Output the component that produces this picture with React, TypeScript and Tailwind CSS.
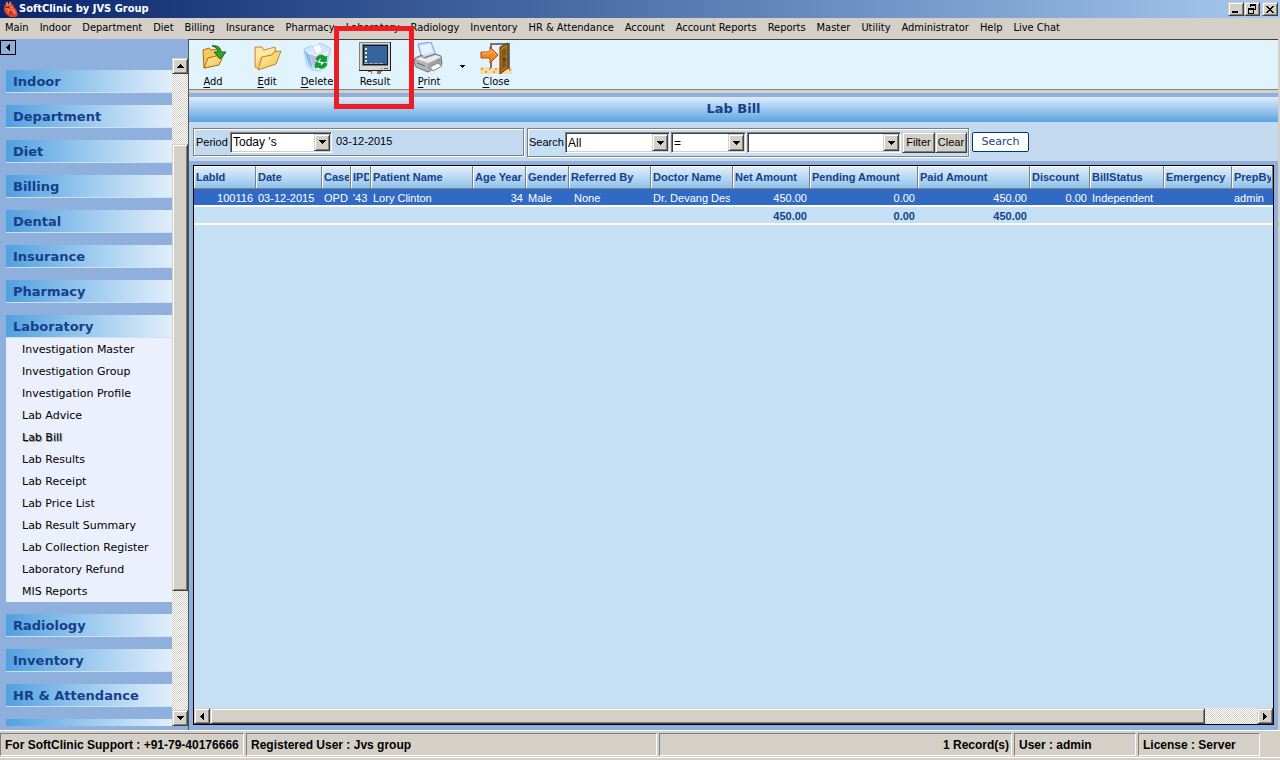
import React from 'react';

const menus = [
  'Main', 'Indoor', 'Department', 'Diet', 'Billing', 'Insurance', 'Pharmacy', 'Laboratory', 'Radiology', 'Inventory',
  'HR & Attendance', 'Account', 'Account Reports', 'Reports', 'Master', 'Utility', 'Administrator', 'Help', 'Live Chat',
];

const labItems = [
  'Investigation Master', 'Investigation Group', 'Investigation Profile', 'Lab Advice', 'Lab Bill', 'Lab Results',
  'Lab Receipt', 'Lab Price List', 'Lab Result Summary', 'Lab Collection Register', 'Laboratory Refund', 'MIS Reports',
];

const sections = [
  'Indoor', 'Department', 'Diet', 'Billing', 'Dental', 'Insurance', 'Pharmacy', 'Laboratory', 'Radiology', 'Inventory',
  'HR & Attendance', 'Account',
];

const columns = [
  { title: 'LabId', col: 'w-[62px]', value: '100116', total: '', right: true },
  { title: 'Date', col: 'w-[66px]', value: '03-12-2015', total: '' },
  { title: 'Case', col: 'w-[29px]', value: 'OPD', total: '' },
  { title: 'IPD', col: 'w-[20px]', value: "'43", total: '' },
  { title: 'Patient Name', col: 'w-[102px]', value: 'Lory Clinton', total: '' },
  { title: 'Age Year', col: 'w-[53px]', value: '34', total: '', right: true },
  { title: 'Gender', col: 'w-[43px]', value: 'Male', total: '' },
  { title: 'Referred By', col: 'w-[82px]', value: ' None', total: '' },
  { title: 'Doctor Name', col: 'w-[82px]', value: 'Dr. Devang Desai', total: '' },
  { title: 'Net Amount', col: 'w-[77px]', value: '450.00', total: '450.00', right: true },
  { title: 'Pending Amount', col: 'w-[108px]', value: '0.00', total: '0.00', right: true },
  { title: 'Paid Amount', col: 'w-[112px]', value: '450.00', total: '450.00', right: true },
  { title: 'Discount', col: 'w-[60px]', value: '0.00', total: '', right: true },
  { title: 'BillStatus', col: 'w-[74px]', value: 'Independent', total: '' },
  { title: 'Emergency', col: 'w-[68px]', value: '', total: '' },
  { title: 'PrepBy', col: '', value: 'admin', total: '' },
];

const raised =
  'border border-t-[#d4d0c8] border-l-[#d4d0c8] border-r-[#404040] border-b-[#404040] bg-[#d4d0c8] shadow-[inset_1px_1px_#fff,inset_-1px_-1px_#808080]';
const sunken =
  'border border-t-[#808080] border-l-[#808080] border-r-white border-b-white shadow-[inset_1px_1px_#404040,inset_-1px_-1px_#d4d0c8]';
const track = 'bg-[repeating-conic-gradient(#fff_0_25%,#d4d0c8_0_50%)] bg-[length:2px_2px]';

function Arrow({ dir }: { dir: 'up' | 'down' | 'left' | 'right' }) {
  const paths = {
    up: 'M3 0h1v1h1v1h1v1h1v1H0V3h1V2h1V1h1z',
    down: 'M0 0h7v1H6v1H5v1H4v1H3V3H2V2H1V1H0z',
    left: 'M3 0h1v7H3V6H2V5H1V4H0V3h1V2h1V1h1z',
    right: 'M0 0h1v1h1v1h1v1h1v1H3v1H2v1H1v1H0z',
  };
  const vertical = dir === 'up' || dir === 'down';
  return (
    <svg width={vertical ? 7 : 4} height={vertical ? 4 : 7} shapeRendering="crispEdges" aria-hidden="true">
      <path d={paths[dir]} />
    </svg>
  );
}

function ScrollButton({ dir }: { dir: 'up' | 'down' | 'left' | 'right' }) {
  return (
    <button type="button" aria-label={`Scroll ${dir}`} className={`flex size-4 shrink-0 items-center justify-center ${raised}`}>
      <Arrow dir={dir} />
    </button>
  );
}

function Dropdown({ label, id, width, options }: { label: string; id: string; width: string; options: string[] }) {
  return (
    <div className={`relative h-[21px] bg-white ${width} ${sunken}`}>
      <select
        id={id}
        aria-label={label}
        className="h-full w-full appearance-none bg-transparent pr-5 pl-[2px] font-['Liberation_Sans',sans-serif] text-[12px] outline-none"
      >
        {options.map((o) => (
          <option key={o}>{o}</option>
        ))}
      </select>
      <span className={`pointer-events-none absolute top-px right-px bottom-px flex w-4 items-center justify-center ${raised}`}>
        <Arrow dir="down" />
      </span>
    </div>
  );
}

function HeartIcon() {
  return (
    <svg width="16" height="16" viewBox="0 0 16 16" aria-hidden="true">
      <path d="M4 2l1-2 1 3 2-3 1 3 2 0 1 3 2 2 2 6-2 2H8L4 13 2 10 2 6z" fill="#d8402a" />
      <path d="M5 1v4M9 1L7 5l4 2" stroke="#f2b09c" fill="none" />
      <path d="M4 7l3 2-1 3M9 8l3 2 1 3" stroke="#f8845c" strokeWidth="2" fill="none" />
      <path d="M3 6l3 1 2-2M7 10l2 3" stroke="#8c1c14" fill="none" />
    </svg>
  );
}

function AddIcon() {
  return (
    <svg width="32" height="32" viewBox="0 0 32 32" aria-hidden="true">
      <path d="M6 8l6-2 2 2 6-1 1 3 1 11-10 4-5 1z" fill="#f5c95c" stroke="#b06c14" />
      <path d="M11 16l16-4-5 11-15 3z" fill="url(#folder)" stroke="#b06c14" />
      <path d="M15 4c6-1 9 2 9 6h5l-6 7-6-7h4c0-3-2-5-6-6z" fill="#35a62c" stroke="#17661a" />
    </svg>
  );
}

function EditIcon() {
  return (
    <svg width="32" height="32" viewBox="0 0 32 32" aria-hidden="true">
      <path d="M4 5h7l2 3 11-3 1 5-1 12-16 5-4-2z" fill="#f5d06c" stroke="#c98a50" />
      <path d="M5 6h6l1 3 11-3v5L9 15 5 22z" fill="#fdeaa0" />
      <path d="M11 15l10-2 2-3 7-1-5 13-18 6z" fill="url(#folder)" stroke="#b98a28" />
    </svg>
  );
}

function DeleteIcon() {
  return (
    <svg width="32" height="32" viewBox="0 0 32 32" aria-hidden="true">
      <path d="M3 7l7-3 5 2 4-5 6 3 5 3-5 18-6 4-8-1-5-4z" fill="#d3e8fa" stroke="#a9cdee" />
      <path d="M6 9l5 17 9 2 5-5 2-14-10 5z" fill="#eef6fe" />
      <path d="M3 8l5 15 4 4-3-14z" fill="#86bdec" />
      <path d="M9 12l5 2 4 1-2 9-4 1z" fill="#bcbce0" />
      <path d="M12 5l6-3 4 6-6 5z" fill="#fff" stroke="#d0d8ea" />
      <path
        d="M15 17c2-5 7-5 9-2l2-1-1 6-6-1 2-2c-2-1-3 0-4 2zM15 20l5 2-2 1c2 1 4 0 5-2l3 1c-2 5-7 5-9 3l-3 1z"
        fill="#129c34"
        stroke="#129c34"
      />
    </svg>
  );
}

function ResultIcon() {
  return (
    <svg width="32" height="32" viewBox="0 0 32 32" shapeRendering="crispEdges" aria-hidden="true">
      <path d="M0 0h32v29H0z" fill="#202020" />
      <path d="M0 0h31v28H0z" fill="#808080" />
      <path d="M1 1h30v27H1z" fill="#d8d6d0" />
      <path d="M3 2h26v22H3z" fill="#808080" />
      <path d="M4 3h25v20H4z" fill="#101820" />
      <path d="M5 4h23v18H5z" fill="#35659c" />
      <path d="M6 6h2v2H6zM6 14h2v2H6z" fill="#b8f4f4" />
      <path d="M6 10h2v2H6zM6 18h2v2H6z" fill="#ffe860" />
      <path d="M5 21h4v1H5zM10 21h4v1h-4zM15 21h4v1h-4zM20 21h4v1h-4z" fill="#a8a8a4" />
      <path d="M22 26h1v1h-1z" fill="#20a020" />
      <path d="M25 26h4v1h-4z" fill="#606060" />
      <path d="M9 29h14v1H9z" fill="#70706c" />
      <path d="M12 29h10v3H12z" fill="#808080" />
      <path d="M13 29h5v3h-5z" fill="#e8e8e4" />
    </svg>
  );
}

function PrintIcon() {
  return (
    <svg width="32" height="32" viewBox="0 0 32 32" aria-hidden="true">
      <path d="M5 2l13-2 5 13-14 4z" fill="#c9defa" stroke="#7c9ed8" />
      <path d="M7 4l10-2 3 8-11 3z" fill="#eaf3ff" />
      <path d="M2 16l7-3 1 3 12-4 6 2 1 8-14 8-12-5-2-4z" fill="#b4b4b8" stroke="#6e6e74" />
      <path d="M3 17l12 4 13-6-5-2-11 4-3-2z" fill="#ececee" />
      <path d="M15 22l13-6v5l-13 7z" fill="#a0a0a6" />
      <path d="M17 25l8-4 4 3-9 5z" fill="#fff" stroke="#85858a" />
      <path d="M4 21l8 3" stroke="#606068" />
      <path d="M25 18h2v1h-2z" fill="#38c038" />
    </svg>
  );
}

function CloseIcon() {
  return (
    <svg width="32" height="32" viewBox="0 0 32 32" aria-hidden="true">
      <path d="M0 25h32v7H0z" fill="#f6dcae" />
      <path d="M1 26h2v2H1zM5 29h2v2H5zM9 26h2v2H9zM13 29h2v2h-2zM15 26h2v2h-2zM29 27h2v2h-2z" fill="#e39a45" />
      <path d="M10 1h20v26h-2V3H12v23h-2z" fill="#707478" />
      <path d="M12 3h10v23H12z" fill="#eef0f4" />
      <path d="M20 5l8-4v25l-8 6z" fill="#a56f24" stroke="#583808" />
      <path d="M22 8l4-2v7l-4 2zM22 19l4-2v7l-4 3z" fill="#8a5514" />
      <path d="M23 16h2v2h-2z" fill="#fff4c0" stroke="#20180c" />
      <path d="M1 10h9V5l8 8-8 8v-5H1z" fill="#f78a1e" stroke="#b3450a" />
      <path d="M2 11h9V8l5 5" stroke="#ffc070" fill="none" />
    </svg>
  );
}

function ToolButton({ icon, hot, rest, width }: { icon: React.ReactNode; hot: string; rest: string; width: string }) {
  return (
    <button type="button" className={`flex shrink-0 flex-col items-center ${width}`}>
      {icon}
      <span className="h-4 leading-4">
        <span className="underline underline-offset-2">{hot}</span>
        {rest}
      </span>
    </button>
  );
}

function TitleBar() {
  return (
    <header className="flex h-[18px] shrink-0 items-center bg-linear-to-r from-[#0a246a] to-[#a6caf0] pr-[2px] pl-[2px]">
      <HeartIcon />
      <h1 className="ml-px grow font-['DejaVu_Sans_Condensed','DejaVu_Sans',sans-serif] text-[11px] leading-4 font-bold text-white">
        SoftClinic by JVS Group
      </h1>
      <div className="flex">
        <button type="button" aria-label="Minimize" className={`flex h-[14px] w-4 items-center justify-center ${raised}`}>
          <svg width="10" height="10" shapeRendering="crispEdges">
            <path d="M1 7h6v2H1z" />
          </svg>
        </button>
        <button type="button" aria-label="Restore" className={`flex h-[14px] w-4 items-center justify-center ${raised}`}>
          <svg width="10" height="10" shapeRendering="crispEdges">
            <path d="M3 0h6v6H7V5h1V2H4v1H3zM1 4h6v6H1zM2 6v3h4V6z" fillRule="evenodd" />
          </svg>
        </button>
        <button type="button" aria-label="Close" className={`ml-[2px] flex h-[14px] w-4 items-center justify-center ${raised}`}>
          <svg width="8" height="7" shapeRendering="crispEdges">
            <path d="M0 0h2v1h1v1h2V1h1V0h2v1H7v1H6v1H5v1h1v1h1v1h1v1H6V6H5V5H3v1H2v1H0V6h1V5h1V4h1V3H2V2H1V1H0z" />
          </svg>
        </button>
      </div>
    </header>
  );
}

function Sidebar() {
  return (
    <aside className="flex w-[188px] shrink-0 flex-col bg-[#8fb0dc] pb-1">
      <button
        type="button"
        aria-label="Collapse sidebar"
        className="mt-px mb-[3px] flex h-[15px] w-4 shrink-0 items-center justify-center border border-black"
      >
        <Arrow dir="left" />
      </button>
      <div className="flex min-h-0 flex-1">
        <nav className="min-w-0 flex-1 overflow-hidden pt-3 pl-[6px] font-['DejaVu_Sans',sans-serif]">
          <div className="flex flex-col gap-3">
            {sections.map((name) => (
              <section key={name}>
                <h2>
                  <button
                    type="button"
                    className="flex h-[23px] w-full items-center border-b border-[#c8e2f8] bg-linear-to-r from-[#50a0e0] via-[#9ccaee] to-[#e2eefa] pt-[2px] pl-[7px] text-[13px] font-bold text-[#153f8a]"
                  >
                    {name}
                  </button>
                </h2>
                {name === 'Laboratory' && (
                  <ul className="bg-[#ecf0fc] text-[11px]">
                    {labItems.map((item) => (
                      <li key={item} className="h-[22px] pt-px pl-4 leading-[22px]">
                        <a href="#" className={item === 'Lab Bill' ? '[text-shadow:1px_1px_#909090]' : ''}>
                          {item}
                        </a>
                      </li>
                    ))}
                  </ul>
                )}
              </section>
            ))}
          </div>
        </nav>
        <div className={`flex w-4 shrink-0 flex-col ${track}`}>
          <ScrollButton dir="up" />
          <div className="flex min-h-0 flex-1 flex-col pt-[70px] pb-[119px]">
            <div className={`flex-1 ${raised}`} />
          </div>
          <ScrollButton dir="down" />
        </div>
      </div>
    </aside>
  );
}

function Toolbar() {
  return (
    <div className="flex h-[51px] shrink-0 items-start border-y border-t-[#404040] border-b-[#808080] bg-[#e1f3fd] pt-[2px] font-['DejaVu_Sans_Condensed','DejaVu_Sans',sans-serif] text-[11px]">
      <ToolButton icon={<AddIcon />} hot="A" rest="dd" width="w-12" />
      <ToolButton icon={<EditIcon />} hot="E" rest="dit" width="w-[60px]" />
      <ToolButton icon={<DeleteIcon />} hot="D" rest="elete" width="w-10" />
      <div className="relative">
        <ToolButton icon={<ResultIcon />} hot="" rest="Result" width="w-[76px]" />
        <span className="pointer-events-none absolute -top-4 -left-[3px] z-10 h-[83px] w-20 border-[5px] border-[#ee1c24]" />
      </div>
      <ToolButton icon={<PrintIcon />} hot="P" rest="rint" width="w-8" />
      <button type="button" aria-label="Print options" className="flex h-12 w-[34px] items-center justify-center">
        <svg width="5" height="3" shapeRendering="crispEdges">
          <path d="M0 0h5v1H4v1H3v1H2V2H1V1H0z" />
        </svg>
      </button>
      <ToolButton icon={<CloseIcon />} hot="C" rest="lose" width="w-[34px]" />
    </div>
  );
}

function FilterBar() {
  return (
    <form className="flex h-[39px] shrink-0 items-start bg-[#c3d9f0] pt-[6px] pl-1 font-['Liberation_Sans',sans-serif] text-[11px]">
      <div className="flex h-7 w-[331px] items-center border border-[#808080] pl-[2px] shadow-[inset_1px_1px_#fff,1px_1px_#fff]">
        <label htmlFor="period" className="w-[34px]">Period</label>
        <Dropdown id="period" label="Period" width="w-[102px]" options={["Today 's", 'Yesterday', 'This Month']} />
        <span className="ml-1 h-[18px]">03-12-2015</span>
      </div>
      <div className="ml-[3px] flex h-[29px] items-center border border-[#808080] bg-[#c5dff5] pr-px pl-px shadow-[inset_1px_1px_#fff,1px_1px_#fff]">
        <label htmlFor="field" className="w-9">Search</label>
        <Dropdown id="field" label="Search field" width="w-[105px]" options={['All', 'LabId', 'Patient Name']} />
        <Dropdown id="operator" label="Operator" width="ml-px w-[75px]" options={['=', '<', '>']} />
        <Dropdown id="value" label="Search value" width="ml-px w-[154px]" options={['']} />
        <button type="button" className={`ml-px h-[21px] w-[33px] ${raised}`}>Filter</button>
        <button type="button" className={`h-[21px] w-8 ${raised}`}>Clear</button>
      </div>
      <button
        type="submit"
        className="mt-1 ml-[3px] h-5 w-[57px] rounded-[2px] border border-[#003c74] bg-white font-['DejaVu_Sans',sans-serif] text-[11px] leading-4 text-[#153f8a]"
      >
        Search
      </button>
    </form>
  );
}

function BillGrid() {
  return (
    <div className="flex min-h-0 flex-1 flex-col border border-black bg-[#c5dff5]">
      <div className="min-h-0 flex-1 overflow-hidden">
        <table className="w-full table-fixed border-separate border-spacing-0 font-['Liberation_Sans',sans-serif] text-[11px]">
          <colgroup>
            {columns.map((c) => (
              <col key={c.title} className={c.col} />
            ))}
          </colgroup>
          <thead>
            <tr className="h-[23px]">
              {columns.map((c) => (
                <th
                  key={c.title}
                  className="border-r border-b border-[#808080] bg-linear-to-b from-[#e4effa] to-[#90c2ea] p-0 pr-px pl-[2px] text-left font-bold text-[#153f8a] shadow-[inset_1px_1px_#fff]"
                >
                  <div className="overflow-hidden whitespace-nowrap">{c.title}</div>
                </th>
              ))}
            </tr>
          </thead>
          <tbody>
            <tr className="h-[18px] bg-[#316ac5] text-white">
              {columns.map((c) => (
                <td key={c.title} className={`border-b-2 border-white p-0 pr-[3px] pl-[2px] ${c.right ? 'text-right' : ''}`}>
                  <div className="h-4 overflow-hidden leading-[18px] whitespace-pre">{c.value}</div>
                </td>
              ))}
            </tr>
            <tr className="h-[18px] font-bold text-[#153f8a]">
              {columns.map((c) => (
                <td key={c.title} className="border-b-2 border-white p-0 pr-[3px] pl-[2px] text-right">
                  <div className="h-4 leading-[18px]">{c.total}</div>
                </td>
              ))}
            </tr>
          </tbody>
        </table>
      </div>
      <div className={`flex h-4 shrink-0 ${track}`}>
        <ScrollButton dir="left" />
        <div className="flex flex-1 pr-[52px]">
          <div className={`flex-1 ${raised}`} />
        </div>
        <ScrollButton dir="right" />
      </div>
    </div>
  );
}

function StatusPanel({ width, children }: { width: string; children: React.ReactNode }) {
  return (
    <div className={`h-[23px] truncate border border-t-[#808080] border-l-[#808080] border-r-white border-b-white pr-[2px] pl-1 leading-[22px] ${width}`}>
      {children}
    </div>
  );
}

function StatusBar() {
  return (
    <footer className="h-[30px] shrink-0 border-t border-white bg-[#d4d0c8]">
      <div className="flex h-[27px] items-start gap-[2px] border-b border-white pt-[2px] pr-5 font-['Liberation_Sans',sans-serif] text-[12px] font-bold">
        <StatusPanel width="w-[244px]">For SoftClinic Support : +91-79-40176666</StatusPanel>
        <StatusPanel width="w-[411px]">Registered User : Jvs group</StatusPanel>
        <StatusPanel width="flex-1 text-right">1 Record(s)</StatusPanel>
        <StatusPanel width="w-[122px]">User : admin</StatusPanel>
        <StatusPanel width="w-[122px]">License : Server</StatusPanel>
      </div>
    </footer>
  );
}

export default function App() {
  return (
    <div className="flex h-screen flex-col overflow-hidden bg-[#d4d0c8] text-black">
      <svg width="0" height="0" className="absolute" aria-hidden="true">
        <linearGradient id="folder" x1="0" y1="0" x2="1" y2="1">
          <stop offset="0" stopColor="#fff3b4" />
          <stop offset="1" stopColor="#f3bc42" />
        </linearGradient>
      </svg>
      <TitleBar />
      <nav className="flex h-[21px] shrink-0 items-center gap-[11px] pl-[5px] font-['DejaVu_Sans_Condensed','DejaVu_Sans',sans-serif] text-[11px] whitespace-nowrap">
        {menus.map((m) => (
          <button key={m} type="button">{m}</button>
        ))}
      </nav>
      <div className="flex min-h-0 flex-1">
        <Sidebar />
        <main className="mr-[2px] flex min-w-0 flex-1 flex-col border-l border-[#505458] bg-[#8fb0dc]">
          <Toolbar />
          <div className="h-[3px] shrink-0 bg-[#d4d0c8]" />
          <h2 className="mt-1 h-[25px] shrink-0 bg-linear-to-b from-[#dcebfa] to-[#58a4e0] text-center font-['DejaVu_Sans',sans-serif] text-[13px] leading-[24px] font-bold text-[#153f8a]">
            Lab Bill
          </h2>
          <FilterBar />
          <div className="flex min-h-0 flex-1 flex-col pt-1 pr-1 pb-[5px] pl-1">
            <BillGrid />
          </div>
        </main>
      </div>
      <StatusBar />
    </div>
  );
}
